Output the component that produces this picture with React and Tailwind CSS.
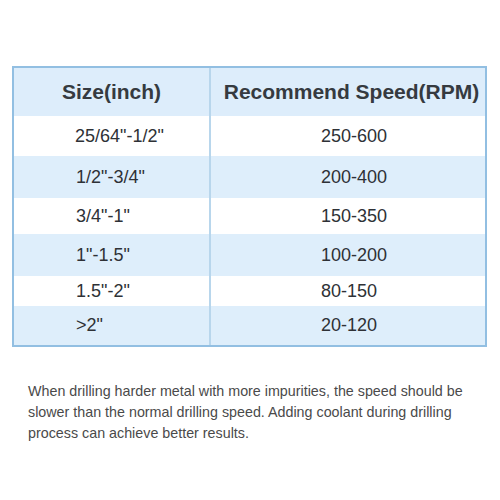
const rows = [
  { size: '25/64"-1/2"', speed: '250-600', h: 'h-[40px]', bg: 'bg-white', pad: 'pl-[61px]' },
  { size: '1/2"-3/4"', speed: '200-400', h: 'h-[42px]', bg: 'bg-[#deeefb]', pad: 'pl-[62px]' },
  { size: '3/4"-1"', speed: '150-350', h: 'h-[36px]', bg: 'bg-white', pad: 'pl-[62px]' },
  { size: '1"-1.5"', speed: '100-200', h: 'h-[42px]', bg: 'bg-[#deeefb]', pad: 'pl-[62px]' },
  { size: '1.5"-2"', speed: '80-150', h: 'h-[30px]', bg: 'bg-white', pad: 'pl-[62px]' },
  { size: '>2"', speed: '20-120', h: 'h-[39px]', bg: 'bg-[#deeefb]', pad: 'pl-[62px]' },
]

const App = () => {
  return (
    <div className="w-[500px] h-[500px] bg-white font-['Liberation_Sans',Arial,sans-serif] pt-[66px] pl-[12px]">
      {/* speed table */}
      <div className="w-[475px] border-2 border-[#92bfe2] flex flex-col">
        <div className="flex h-[48px] bg-[#ddedfb]">
          <div className="w-[197px] flex items-center justify-center border-r-2 border-[#b8d6ec] text-[21px] font-bold text-[#353a40]">
            Size(inch)
          </div>
          <div className="flex-1 flex items-center justify-center pl-[7px] text-[21px] font-bold text-[#353a40]">
            Recommend Speed(RPM)
          </div>
        </div>
        {rows.map((row, i) => (
          <div key={i} className={`flex ${row.h} ${row.bg}`}>
            <div className={`w-[197px] flex items-center ${row.pad} border-r-2 border-[#b8d6ec] text-[18px] text-[#2e3136]`}>
              {row.size}
            </div>
            <div className="flex-1 flex items-center pl-[110px] text-[18px] text-[#2e3136]">
              {row.speed}
            </div>
          </div>
        ))}
      </div>

      <p className="mt-[34px] w-[480px] pl-[16px] text-[14.3px] leading-[21px] text-[#4a4a4a]">
        When drilling harder metal with more impurities, the speed should be slower than the normal drilling speed. Adding coolant during drilling process can achieve better results.
      </p>
    </div>
  )
}

export default App
